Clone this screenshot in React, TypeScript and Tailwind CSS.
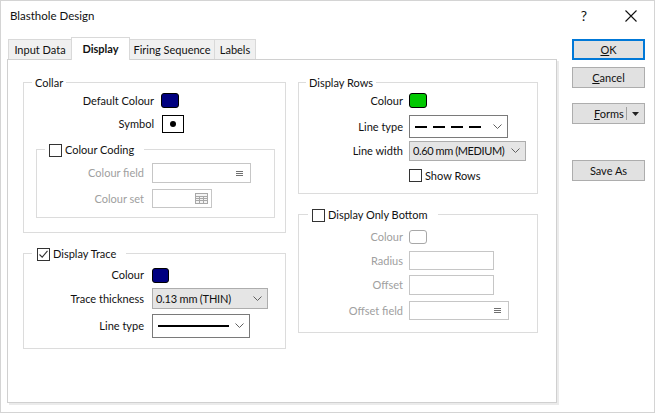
import React from 'react';

const Chevron = () => (
    <svg width="9" height="6" viewBox="0 0 9 6" className="shrink-0">
        <polyline points="0.5,0.5 4.5,4.5 8.5,0.5" fill="none" stroke="#606060" strokeWidth="1" />
    </svg>
);

const ListIcon = () => (
    <svg width="7" height="7" viewBox="0 0 7 7" className="shrink-0">
        <path d="M0 1.5h7M0 3.5h7M0 5.5h7" stroke="#707070" strokeWidth="1" />
    </svg>
);

const TableIcon = () => (
    <svg width="13" height="11" viewBox="0 0 13 11" className="shrink-0">
        <rect x="0.5" y="0.5" width="12" height="10" fill="#f4f4f4" stroke="#a8a8a8" />
        <path d="M0.5 3.5h12M0.5 5.5h12M0.5 7.5h12M4.5 3.5v7M8.5 3.5v7" stroke="#a8a8a8" strokeWidth="1" />
    </svg>
);

function Swatch({ color, className }: { color: string; className: string }) {
    return <div className={`border border-black rounded-[3px] ${className}`} style={{ backgroundColor: color }} />;
}

function Check({ checked = false }: { checked?: boolean }) {
    return (
        <div className="w-[13px] h-[13px] border border-[#333333] bg-white shrink-0 flex items-center justify-center">
            {checked && (
                <svg width="11" height="11" viewBox="0 0 11 11">
                    <polyline points="1.5,5.5 4.2,8.2 9.5,1.8" fill="none" stroke="#333333" strokeWidth="1.1" />
                </svg>
            )}
        </div>
    );
}

function Tab({ label, active = false, className = '' }: { label: string; active?: boolean; className?: string }) {
    if (active) {
        return (
            <div className={`h-[23px] bg-white border border-b-0 border-[#d9d9d9] flex items-center justify-center font-bold relative z-10 -mx-[1px] whitespace-nowrap ${className}`}>
                {label}
            </div>
        );
    }
    return (
        <div className={`h-[20px] mb-[1px] bg-[#f0f0f0] border border-b-0 border-[#d9d9d9] flex items-center justify-center whitespace-nowrap ${className}`}>
            {label}
        </div>
    );
}

function Btn({ children, primary = false }: { children: React.ReactNode; primary?: boolean }) {
    return (
        <div
            className={`h-[21px] w-[73px] bg-[#e1e1e1] flex items-center justify-center ${
                primary ? 'border-2 border-[#0078d7]' : 'border border-[#adadad]'
            }`}
        >
            {children}
        </div>
    );
}

export default function App() {
    return (
        <div className="w-[655px] h-[413px] border border-[#d4d4d4] bg-white flex flex-col text-[11px] leading-[16px] text-[#111111] font-['Lato','Noto_Sans',sans-serif] whitespace-nowrap select-none">
            {/* Title bar */}
            <div className="h-[30px] flex items-center shrink-0 text-[11.5px]">
                <span className="ml-[9px]">Blasthole Design</span>
                <span className="ml-auto mr-[38px] text-[14px]">?</span>
                <svg width="12" height="12" viewBox="0 0 12 12" className="mr-[17px]">
                    <path d="M0.5 0.5L11.5 11.5M11.5 0.5L0.5 11.5" stroke="#111" strokeWidth="1.1" />
                </svg>
            </div>

            <div className="flex pt-[7px]">
                {/* Tab control */}
                <div className="ml-[6px] flex flex-col">
                    <div className="flex items-end h-[22px] pl-[1px] -mb-[1px] relative z-10">
                        <Tab label="Input Data" className="w-[64px]" />
                        <Tab label="Display" active className="w-[59px]" />
                        <Tab label="Firing Sequence" className="w-[86px]" />
                        <Tab label="Labels" className="w-[41px] border-l-0" />
                    </div>
                    <div className="w-[550px] h-[344px] border border-[#d0d0d0] shadow-[2px_2px_0_#ebebeb] flex pl-[15px] pt-[22px] gap-[12px]">
                        {/* Left column */}
                        <div className="w-[263px] flex flex-col">
                            {/* Collar */}
                            <div className="border border-[#dcdcdc] flex flex-col pb-[14px]">
                                <div className="-mt-[8px] ml-[8px] px-[3px] h-[16px] bg-white w-fit">Collar</div>
                                <div className="flex items-center mt-[2px] h-[15px]">
                                    <span className="w-[130px] text-right">Default Colour</span>
                                    <Swatch color="#000080" className="ml-[7px] w-[18px] h-[15px]" />
                                </div>
                                <div className="flex items-center mt-[7px] h-[18px]">
                                    <span className="w-[130px] text-right">Symbol</span>
                                    <div className="ml-[8px] w-[22px] h-[18px] border border-black flex items-center justify-center">
                                        <div className="w-[6px] h-[6px] rounded-full bg-black" />
                                    </div>
                                </div>
                                {/* Colour Coding */}
                                <div className="mt-[16px] ml-[12px] w-[239px] border border-[#dcdcdc] flex flex-col pb-[9px] text-[#a0a0a0]">
                                    <div className="-mt-[7px] ml-[8px] pl-[4px] pr-[10px] h-[14px] bg-white w-fit flex items-center gap-[3px] text-[#111111]">
                                        <Check />
                                        <span>Colour Coding</span>
                                    </div>
                                    <div className="flex items-center mt-[6px]">
                                        <span className="w-[107px] text-right">Colour field</span>
                                        <div className="ml-[8px] w-[99px] h-[20px] border border-[#c6c6c6] flex items-center justify-end pr-[7px]">
                                            <ListIcon />
                                        </div>
                                    </div>
                                    <div className="flex items-center mt-[6px]">
                                        <span className="w-[107px] text-right">Colour set</span>
                                        <div className="ml-[8px] w-[60px] h-[19px] border border-[#c6c6c6] flex items-center justify-end pr-[3px]">
                                            <TableIcon />
                                        </div>
                                    </div>
                                </div>
                            </div>

                            {/* Display Trace */}
                            <div className="mt-[20px] border border-[#dcdcdc] flex flex-col pb-[10px]">
                                <div className="-mt-[7px] ml-[8px] pl-[5px] pr-[10px] h-[14px] bg-white w-fit flex items-center gap-[3px]">
                                    <Check checked />
                                    <span>Display Trace</span>
                                </div>
                                <div className="flex items-center mt-[6px]">
                                    <span className="w-[120px] text-right">Colour</span>
                                    <Swatch color="#000080" className="ml-[8px] w-[17px] h-[15px]" />
                                </div>
                                <div className="flex items-center mt-[5px]">
                                    <span className="w-[120px] text-right">Trace thickness</span>
                                    <div className="ml-[8px] w-[116px] h-[21px] bg-[#e5e5e5] border border-[#adadad] flex items-center pl-[3px] pr-[5px]">
                                        <span className="tracking-[-0.2px]">0.13 mm (THIN)</span>
                                        <span className="ml-auto"><Chevron /></span>
                                    </div>
                                </div>
                                <div className="flex items-center mt-[5px]">
                                    <span className="w-[120px] text-right">Line type</span>
                                    <div className="ml-[8px] w-[98px] h-[24px] bg-white border border-[#7a7a7a] flex items-center pl-[5px] pr-[5px]">
                                        <div className="w-[71px] h-[2px] bg-black" />
                                        <span className="ml-auto"><Chevron /></span>
                                    </div>
                                </div>
                            </div>
                        </div>

                        {/* Right column */}
                        <div className="w-[240px] flex flex-col">
                            {/* Display Rows */}
                            <div className="border border-[#dcdcdc] flex flex-col pb-[11px]">
                                <div className="-mt-[8px] ml-[7px] px-[3px] h-[16px] bg-white w-fit">Display Rows</div>
                                <div className="flex items-center mt-[2px] h-[15px]">
                                    <span className="w-[104px] text-right">Colour</span>
                                    <Swatch color="#00c800" className="ml-[6px] w-[18px] h-[15px]" />
                                </div>
                                <div className="flex items-center mt-[7px]">
                                    <span className="w-[104px] text-right">Line type</span>
                                    <div className="ml-[6px] w-[99px] h-[23px] bg-white border border-[#7a7a7a] flex items-center pl-[5px] pr-[5px]">
                                        <div className="flex gap-[6px]">
                                            <div className="w-[12px] h-[2px] bg-black" />
                                            <div className="w-[12px] h-[2px] bg-black" />
                                            <div className="w-[12px] h-[2px] bg-black" />
                                            <div className="w-[12px] h-[2px] bg-black" />
                                        </div>
                                        <span className="ml-auto"><Chevron /></span>
                                    </div>
                                </div>
                                <div className="flex items-center mt-[3px]">
                                    <span className="w-[104px] text-right">Line width</span>
                                    <div className="ml-[6px] w-[117px] h-[20px] bg-[#e5e5e5] border border-[#adadad] flex items-center pl-[3px] pr-[5px]">
                                        <span className="tracking-[-0.4px]">0.60 mm (MEDIUM)</span>
                                        <span className="ml-auto"><Chevron /></span>
                                    </div>
                                </div>
                                <div className="flex items-center mt-[8px] ml-[110px] gap-[3px] h-[13px]">
                                    <Check />
                                    <span>Show Rows</span>
                                </div>
                            </div>

                            {/* Display Only Bottom */}
                            <div className="mt-[20px] border border-[#dcdcdc] flex flex-col pb-[12px] text-[#a0a0a0]">
                                <div className="-mt-[7px] ml-[9px] pl-[4px] pr-[10px] h-[14px] bg-white w-fit flex items-center gap-[3px] text-[#111111]">
                                    <Check />
                                    <span>Display Only Bottom</span>
                                </div>
                                <div className="flex items-center mt-[7px]">
                                    <span className="w-[104px] text-right">Colour</span>
                                    <div className="ml-[6px] w-[18px] h-[14px] border border-[#a8a8a8] rounded-[3px]" />
                                </div>
                                <div className="flex items-center mt-[6px]">
                                    <span className="w-[104px] text-right">Radius</span>
                                    <div className="ml-[6px] w-[85px] h-[19px] border border-[#c6c6c6]" />
                                </div>
                                <div className="flex items-center mt-[5px]">
                                    <span className="w-[104px] text-right">Offset</span>
                                    <div className="ml-[6px] w-[85px] h-[20px] border border-[#c6c6c6]" />
                                </div>
                                <div className="flex items-center mt-[6px]">
                                    <span className="w-[104px] text-right">Offset field</span>
                                    <div className="ml-[6px] w-[100px] h-[19px] border border-[#c6c6c6] flex items-center justify-end pr-[7px]">
                                        <ListIcon />
                                    </div>
                                </div>
                            </div>
                        </div>
                    </div>
                </div>

                {/* Buttons */}
                <div className="ml-[15px] pt-[1px] flex flex-col">
                    <Btn primary>
                        <span><span className="underline">O</span>K</span>
                    </Btn>
                    <div className="mt-[7px]">
                        <Btn>
                            <span><span className="underline">C</span>ancel</span>
                        </Btn>
                    </div>
                    <div className="mt-[15px] h-[21px] w-[73px] bg-[#e1e1e1] border border-[#adadad] flex items-center">
                        <span className="ml-[21px]"><span className="underline">F</span>orms</span>
                        <div className="ml-auto w-[1px] h-[13px] bg-[#a0a0a0]" />
                        <svg width="7" height="4" viewBox="0 0 7 4" className="mx-[5px]">
                            <polygon points="0,0 7,0 3.5,4" fill="#222" />
                        </svg>
                    </div>
                    <div className="mt-[36px]">
                        <Btn>Save As</Btn>
                    </div>
                </div>
            </div>
        </div>
    );
}
